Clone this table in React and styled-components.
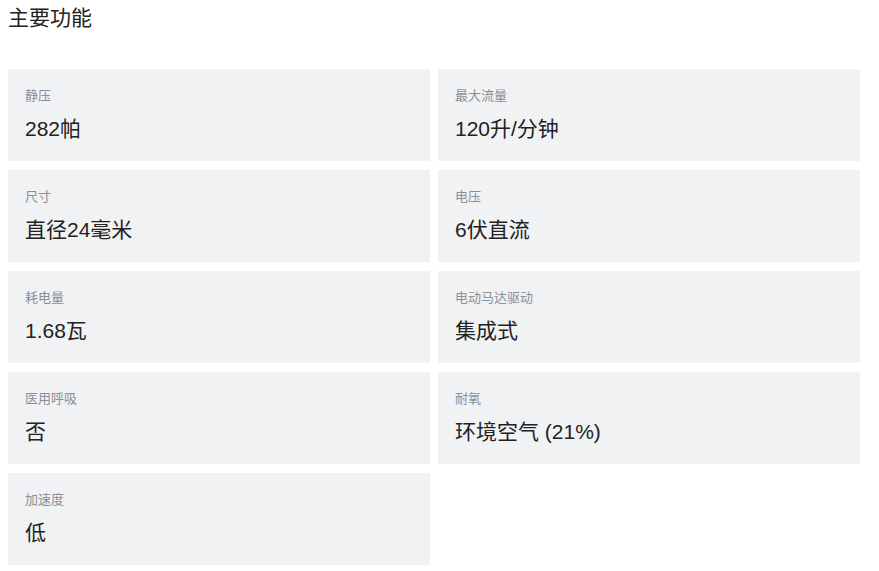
import React from 'react'
import styled, { createGlobalStyle } from 'styled-components'

const GlobalStyle = createGlobalStyle`
  body {
    margin: 0;
    background: #fff;
    font-family: "Liberation Sans", "Noto Sans CJK SC", sans-serif;
  }
`

const Root = styled.div`
  padding: 4px 8px 8px;
`

const Title = styled.h2`
  margin: 0 0 37px;
  font-size: 21px;
  font-weight: 400;
  line-height: 28px;
  color: #222;
`

const Grid = styled.div`
  display: grid;
  grid-template-columns: 422px 422px;
  gap: 9px 8px;
`

const Card = styled.div`
  background: #f1f2f4;
  height: 92px;
  box-sizing: border-box;
  padding: 18px 17px;
`

const Label = styled.div`
  font-size: 13px;
  line-height: 18px;
  color: #8b8f96;
`

const Value = styled.div`
  margin-top: 10px;
  font-size: 21px;
  line-height: 28px;
  color: #222;
`

const specs = [
  ['静压', '282帕'],
  ['最大流量', '120升/分钟'],
  ['尺寸', '直径24毫米'],
  ['电压', '6伏直流'],
  ['耗电量', '1.68瓦'],
  ['电动马达驱动', '集成式'],
  ['医用呼吸', '否'],
  ['耐氧', '环境空气 (21%)'],
  ['加速度', '低']
]

const App = () => (
  <Root>
    <GlobalStyle />
    <Title>主要功能</Title>
    <Grid>
      {specs.map(([label, value]) => (
        <Card key={label}>
          <Label>{label}</Label>
          <Value>{value}</Value>
        </Card>
      ))}
    </Grid>
  </Root>
)

export default App
